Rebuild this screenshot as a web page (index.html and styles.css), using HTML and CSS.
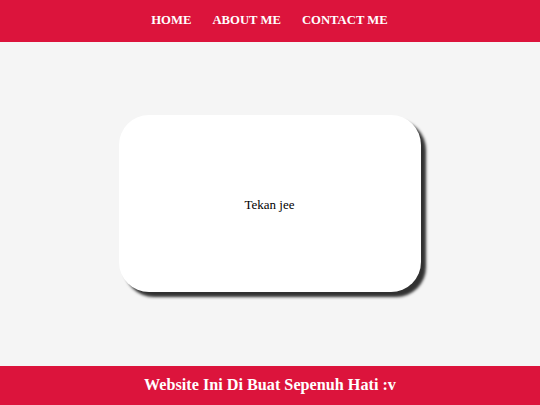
FILE: index.html
```html
<!DOCTYPE html>
<html>
<head>
<meta charset="utf-8">
<link rel="stylesheet" href="styles.css">
</head>
<body>
<header class="topbar">
  <nav class="nav">
    <a class="nav-link" href="#">HOME</a>
    <a class="nav-link" href="#">ABOUT ME</a>
    <a class="nav-link" href="#">CONTACT ME</a>
  </nav>
</header>
<main class="content">
  <div class="card"><span class="card-text">Tekan jee</span></div>
</main>
<footer class="footer">Website Ini Di Buat Sepenuh Hati :v</footer>
</body>
</html>
```
FILE: styles.css
```css
html, body {
  margin: 0;
  padding: 0;
  height: 100%;
}
body {
  font-family: "Liberation Serif", "Times New Roman", serif;
  background: #f5f5f5;
  display: flex;
  flex-direction: column;
}
.topbar {
  background: #dc143c;
  height: 42px;
  display: flex;
  align-items: center;
  justify-content: center;
  flex: none;
}
.nav {
  display: flex;
  gap: 21px;
  margin-left: -1px;
  margin-top: -1px;
}
.nav-link {
  color: #ffffff;
  text-decoration: none;
  font-weight: bold;
  font-size: 12.7px;
  font-family: "Liberation Serif", "Times New Roman", serif;
}
.content {
  flex: 1;
  display: flex;
  align-items: center;
  justify-content: center;
}
.card {
  width: 302px;
  height: 177px;
  background: #ffffff;
  border-radius: 30px;
  box-shadow: 5px 5px 3px rgba(0, 0, 0, 0.8);
  display: flex;
  align-items: center;
  justify-content: center;
  margin-left: -1px;
  margin-top: -1px;
}
.card-text {
  font-family: "Liberation Serif", "Times New Roman", serif;
  font-size: 13px;
  color: #000;
  padding-top: 3px;
}
.footer {
  background: #dc143c;
  height: 39px;
  flex: none;
  display: flex;
  align-items: center;
  justify-content: center;
  color: #fff;
  font-weight: bold;
  font-size: 16.2px;
}
```
